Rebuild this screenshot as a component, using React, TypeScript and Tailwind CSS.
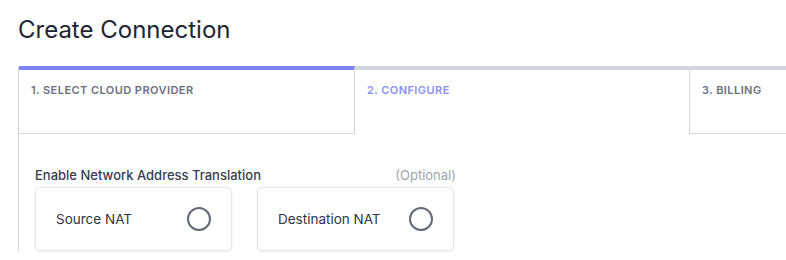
import React from "react";

function Radio() {
  return (
    <span className="block h-[24px] w-[24px] rounded-full border-2 border-[#636a76] bg-white" />
  );
}

function Card({ label }: { label: string }) {
  return (
    <div className="flex h-[64px] w-[197px] items-center justify-between rounded-[5px] border border-[#e6e7eb] bg-white pl-[20px] pr-[20px] shadow-[0_1px_3px_rgba(0,0,0,0.08)]">
      <span className="text-[13.5px] text-[#2f3542]">{label}</span>
      <Radio />
    </div>
  );
}

export default function App() {
  return (
    <div
      className="h-[260px] w-[786px] overflow-hidden bg-white"
      style={{ fontFamily: "Inter, 'Noto Sans', sans-serif" }}
    >
      <h1 className="pl-[18px] pt-[15px] text-[24px] font-normal leading-[30px] text-[#1e2533]">
        Create Connection
      </h1>
      <div className="ml-[18px] mt-[21px] flex w-[1100px]">
        <div className="h-[68px] w-[337px] shrink-0 rounded-tl-[3px] border-x border-b border-t-4 border-x-[#d4d5db] border-b-[#d4d5db] border-t-[#7c84f2] px-3 pt-3 text-[11px] font-semibold leading-4 tracking-[0.04em] text-[#6b7080]">
          1. SELECT CLOUD PROVIDER
        </div>
        <div className="h-[68px] w-[334px] shrink-0 border-t-4 border-t-[#d4d5db] px-3 pt-3 text-[11px] font-semibold leading-4 tracking-[0.04em] text-[#8b8ff4]">
          2. CONFIGURE
        </div>
        <div className="h-[68px] w-[336px] shrink-0 border-b border-l border-t-4 border-b-[#d4d5db] border-l-[#d4d5db] border-t-[#d4d5db] px-3 pt-3 text-[11px] font-semibold leading-4 tracking-[0.04em] text-[#6b7080]">
          3. BILLING
        </div>
      </div>
      <div className="ml-[18px] border-l border-[#d4d5db] pl-[16px] pt-[32px]">
        <div className="flex w-[421px] items-center justify-between text-[13px] leading-[18px]">
          <span className="font-medium text-[#363d4a]">Enable Network Address Translation</span>
          <span className="text-[#a0a4ad]">(Optional)</span>
        </div>
        <div className="mt-[3px] flex gap-[25px]">
          <Card label="Source NAT" />
          <Card label="Destination NAT" />
        </div>
      </div>
    </div>
  );
}
